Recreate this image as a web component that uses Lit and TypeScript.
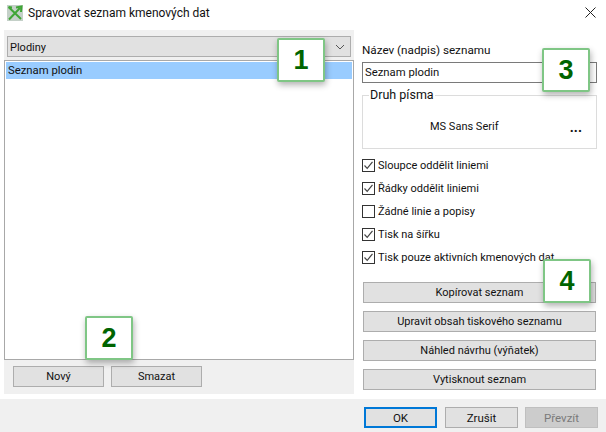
import { LitElement, html, css, svg } from "lit";
import { customElement } from "lit/decorators.js";

const checks: [string, boolean][] = [
  ["Sloupce oddělit liniemi", true],
  ["Řádky oddělit liniemi", true],
  ["Žádné linie a popisy", false],
  ["Tisk na šířku", true],
  ["Tisk pouze aktivních kmenových dat", true],
];
const actions = ["Kopírovat seznam", "Upravit obsah tiskového seznamu", "Náhled návrhu (výňatek)", "Vytisknout seznam"];
const badges = [
  { n: "1", cls: "b1" },
  { n: "2", cls: "b2" },
  { n: "3", cls: "b3" },
  { n: "4", cls: "b4" },
];

@customElement("app-root")
export class AppRoot extends LitElement {
  static styles = css`
    :host {
      display: block;
      position: relative;
      width: 606px;
      height: 432px;
      overflow: hidden;
      background: #fff;
      font-family: Roboto, "Noto Sans", sans-serif;
      font-size: 11px;
      color: #111;
    }
    .titlebar {
      height: 30px;
      display: flex;
      align-items: center;
      padding: 0 0 5px 7px;
      gap: 5px;
      box-sizing: border-box;
    }
    .titlebar .title { flex: 1; font-size: 12px; padding-top: 1px; }
    .close { width: 11px; height: 11px; margin-right: 10px; display: block; }
    .logo { width: 16px; height: 16px; display: block; }
    .body {
      height: 364px;
      padding-left: 4px;
      display: flex;
      box-sizing: border-box;
    }
    .left {
      width: 350px;
      background: #f0f0f0;
      display: flex;
      flex-direction: column;
      padding-top: 6px;
      box-sizing: border-box;
    }
    .combo {
      margin: 0 3px;
      height: 21px;
      border: 1px solid #adadad;
      background: #e1e1e1;
      display: flex;
      align-items: center;
      justify-content: space-between;
      padding: 1px 5px 0 2px;
      box-sizing: border-box;
    }
    .combo svg { width: 10px; height: 6px; display: block; }
    .list {
      margin-top: 3px;
      height: 300px;
      background: #fff;
      border: 1px solid #a8a8a8;
      padding: 1px;
      box-sizing: border-box;
    }
    .sel {
      height: 17px;
      background: #99ccff;
      line-height: 18px;
      padding-left: 2px;
      font-size: 11.3px;
    }
    .left-btns {
      display: flex;
      gap: 7px;
      padding: 6px 0 0 9px;
    }
    .btn {
      box-sizing: border-box;
      border: 1px solid #adadad;
      background: #e1e1e1;
      display: flex;
      align-items: center;
      justify-content: center;
      height: 21px;
    }
    .left-btns .btn { width: 91px; }
    .right {
      flex: 1;
      display: flex;
      flex-direction: column;
      padding: 13px 9px 0 8px;
      box-sizing: border-box;
      min-width: 0;
    }
    .label { height: 19px; line-height: 14px; padding-left: 0; font-size: 11.7px; }
    .input {
      height: 21px;
      border: 1px solid #7a7a7a;
      box-sizing: border-box;
      line-height: 19px;
      padding-left: 2px;
      font-size: 11.3px;
    }
    .group {
      position: relative;
      margin-top: 12px;
      height: 54px;
      border: 1px solid #dcdcdc;
      box-sizing: border-box;
      display: flex;
      align-items: center;
      padding: 9px 14px 0 67px;
      justify-content: space-between;
    }
    .legend {
      position: absolute;
      left: 6px;
      top: -8px;
      background: #fff;
      padding: 0 1px;
      line-height: 14px;
      font-size: 12.5px;
    }
    .dots { font-weight: 700; font-size: 14px; line-height: 10px; padding-top: 1px; letter-spacing: 0; }
    .checks { display: flex; flex-direction: column; gap: 9px; margin-top: 9px; }
    .check { display: flex; align-items: center; gap: 3px; height: 14px; }
    .box { width: 13px; height: 13px; border: 1px solid #333; box-sizing: border-box; background: #fff; display: block; flex: none; }
    .box svg { display: block; width: 11px; height: 11px; }
    .actions { display: flex; flex-direction: column; gap: 8px; margin: 18px 1px 0; }
    .actions .btn { height: 21px; }
    .footer {
      height: 33px;
      margin-top: 5px;
      background: #f0f0f0;
      display: flex;
      gap: 8px;
      padding: 8px 8px 0 0;
      justify-content: flex-end;
      box-sizing: border-box;
    }
    .footer .btn { width: 73px; height: 21px; font-size: 11.5px; }
    .footer .ok { border: 2px solid #0078d7; }
    .footer .off { background: #cccccc; border-color: #bfbfbf; color: #7a7a7a; margin-left: -1px; }
    .badge {
      position: absolute;
      width: 48px;
      height: 44px;
      background: #fff;
      border: 2px solid #7fc685;
      border-radius: 2px;
      box-sizing: border-box;
      box-shadow: 1px 3px 6px rgba(0, 0, 0, 0.3);
      display: flex;
      align-items: center;
      justify-content: center;
      font-family: "Liberation Sans", Arial, sans-serif;
      font-weight: 700;
      font-size: 27px;
      color: #006400;
    }
    .b1 { left: 277px; top: 38px; }
    .b2 { left: 85px; top: 316px; }
    .b3 { left: 542px; top: 48px; }
    .b4 { left: 543px; top: 259px; }
  `;

  private logo() {
    return svg`<svg class="logo" viewBox="0 0 16 16">
      <rect width="16" height="16" fill="#c4d0c8"/>
      <path d="M1.5 2 L14 14 M1.5 2 L5 2.5 M2 14.5 L13 3 M9 2.5 L14.5 1.5 L14 7" fill="none" stroke="#3fa535" stroke-width="2"/>
    </svg>`;
  }

  render() {
    return html`
      <div class="titlebar">
        ${this.logo()}
        <span class="title">Spravovat seznam kmenových dat</span>
        <svg class="close" viewBox="0 0 11 11"><path d="M0.5 0.5 L10.5 10.5 M10.5 0.5 L0.5 10.5" stroke="#222" stroke-width="1" fill="none"/></svg>
      </div>
      <div class="body">
        <div class="left">
          <div class="combo">
            <span>Plodiny</span>
            <svg viewBox="0 0 10 6"><path d="M1 1 L5 5 L9 1" fill="none" stroke="#555" stroke-width="1"/></svg>
          </div>
          <div class="list"><div class="sel">Seznam plodin</div></div>
          <div class="left-btns">
            <div class="btn">Nový</div>
            <div class="btn">Smazat</div>
          </div>
        </div>
        <div class="right">
          <div class="label">Název (nadpis) seznamu</div>
          <div class="input">Seznam plodin</div>
          <div class="group">
            <span class="legend">Druh písma</span>
            <span>MS Sans Serif</span>
            <span class="dots">...</span>
          </div>
          <div class="checks">
            ${checks.map(
              ([t, on]) => html`<div class="check">
                <span class="box">${on
                  ? html`<svg viewBox="0 0 11 11"><path d="M1.5 5.5 L4.2 8.3 L9.5 1.8" fill="none" stroke="#444" stroke-width="1.2"/></svg>`
                  : ""}</span>
                <span>${t}</span>
              </div>`
            )}
          </div>
          <div class="actions">
            ${actions.map((a) => html`<div class="btn">${a}</div>`)}
          </div>
        </div>
      </div>
      <div class="footer">
        <div class="btn ok">OK</div>
        <div class="btn">Zrušit</div>
        <div class="btn off">Převzít</div>
      </div>
      ${badges.map((b) => html`<div class="badge ${b.cls}">${b.n}</div>`)}
    `;
  }
}
